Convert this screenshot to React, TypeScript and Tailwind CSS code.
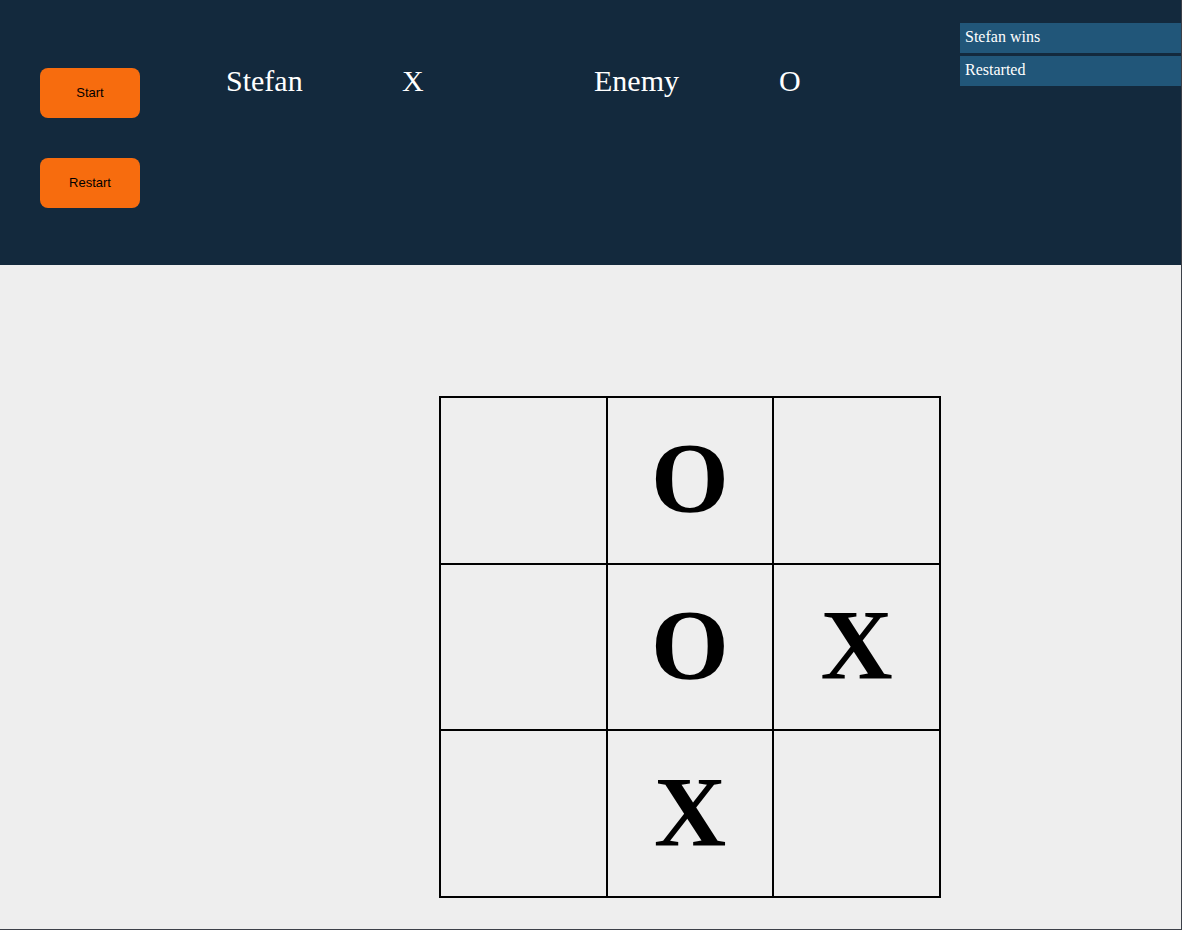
const board = ["", "O", "", "", "O", "X", "", "X", ""];

const log = ["Stefan wins", "Restarted"];

export default function App() {
  return (
    <div className="h-[930px] w-full border-r border-b border-[#3c4048] bg-[#eeeeee]">
      <header className="relative flex h-[265px] bg-[#13293d]">
        <div className="flex flex-col gap-[40px] pl-[40px] pt-[68px]">
          <button className="h-[50px] w-[100px] rounded-[8px] bg-[#f76c0e] text-[13px] text-black font-['Liberation_Sans',Arial,sans-serif]">
            Start
          </button>
          <button className="h-[50px] w-[100px] rounded-[8px] bg-[#f76c0e] text-[13px] text-black font-['Liberation_Sans',Arial,sans-serif]">
            Restart
          </button>
        </div>
        <div className="ml-[86px] flex h-fit pt-[58px] text-[30px] text-white font-['Liberation_Serif','Times_New_Roman',serif]">
          <span className="w-[176px]">Stefan</span>
          <span className="w-[192px]">X</span>
          <span className="w-[185px]">Enemy</span>
          <span>O</span>
        </div>
        <ul className="absolute right-0 top-[23px] flex w-[221px] flex-col gap-[3px] text-[16px] text-white font-['Liberation_Serif','Times_New_Roman',serif]">
          {log.map((entry) => (
            <li key={entry} className="h-[30px] bg-[#215679] pl-[5px] pt-[5px] leading-[18px]">
              {entry}
            </li>
          ))}
        </ul>
      </header>
      <main className="pl-[439px] pt-[131px]">
        <div className="grid h-[502px] w-[502px] grid-cols-3 grid-rows-3 border border-black">
          {board.map((cell, i) => (
            <div
              key={i}
              className="flex items-center justify-center border border-black pb-[4px] text-[100px] font-bold text-black font-['Liberation_Serif','Times_New_Roman',serif]"
            >
              {cell}
            </div>
          ))}
        </div>
      </main>
    </div>
  );
}
